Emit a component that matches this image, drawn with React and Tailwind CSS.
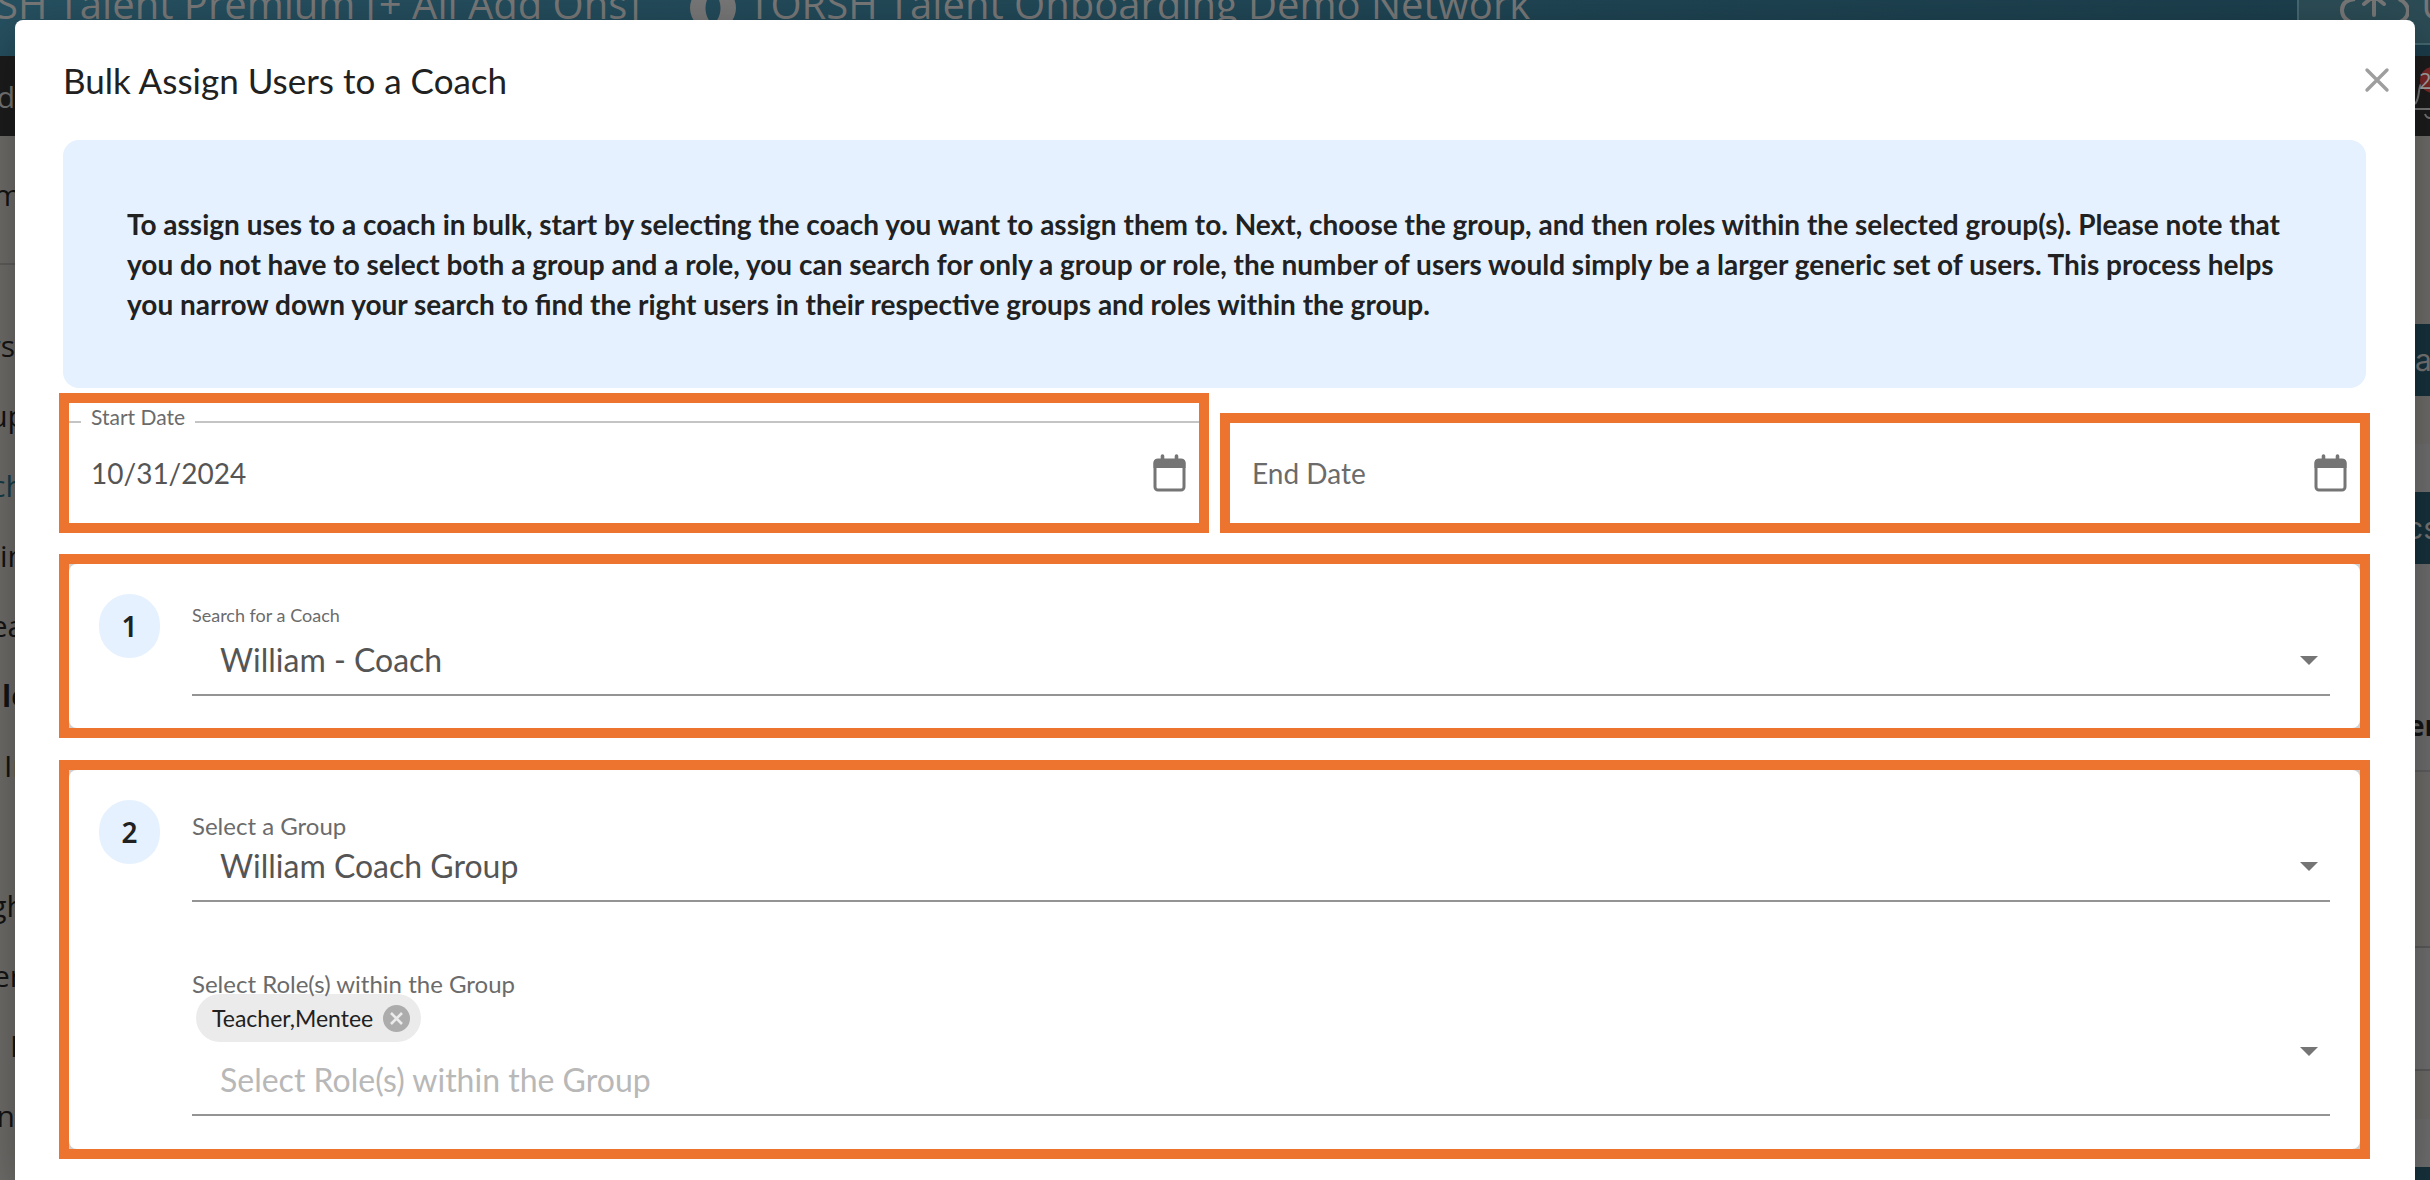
import { useState } from 'react'

const INFO_TEXT =
  'To assign uses to a coach in bulk, start by selecting the coach you want to assign them to. Next, choose the group, and then roles within the selected group(s). Please note that you do not have to select both a group and a role, you can search for only a group or role, the number of users would simply be a larger generic set of users. This process helps you narrow down your search to find the right users in their respective groups and roles within the group.'

function CalendarIcon() {
  return (
    <svg width="34" height="38" viewBox="0 0 34 38" fill="none" aria-hidden="true">
      <path d="M9.5 2v6M23.5 2v6" stroke="#757575" strokeWidth="3.6" strokeLinecap="round" />
      <rect x="2" y="6" width="29" height="30" rx="3" stroke="#757575" strokeWidth="3" />
      <path d="M0.5 9a4 4 0 0 1 4-4h24a4 4 0 0 1 4 4v5h-32z" fill="#757575" />
    </svg>
  )
}

function Arrow() {
  return (
    <svg width="18" height="9" viewBox="0 0 18 9" className="pointer-events-none shrink-0" aria-hidden="true">
      <path d="M0 0h18L9 9z" fill="#757575" />
    </svg>
  )
}

function StepNumber({ children }) {
  return (
    <div className="flex h-16 w-[61px] shrink-0 items-center justify-center rounded-full bg-[#e5f1fe] font-['Noto_Sans',sans-serif] text-[28px] font-semibold text-[#212121]">
      {children}
    </div>
  )
}

function SelectField({ id, label, labelClass, options }) {
  return (
    <div>
      <label htmlFor={id} className={`block text-[#6b6b6b] ${labelClass}`}>
        {label}
      </label>
      <div className="grid items-center border-b-2 border-[#949494]">
        <select
          id={id}
          className="col-start-1 row-start-1 h-[66px] w-full appearance-none bg-transparent pb-0.5 pl-7 text-[32px] text-[#555] outline-none"
        >
          {options.map((o) => (
            <option key={o}>{o}</option>
          ))}
        </select>
        <div className="pointer-events-none col-start-1 row-start-1 justify-self-end pr-3 pb-0.5">
          <Arrow />
        </div>
      </div>
    </div>
  )
}

// Page that stays visible around the dialog
function Backdrop() {
  return (
    <div aria-hidden="true" className="absolute inset-0 overflow-hidden bg-[#706e6b] font-['Open_Sans',sans-serif]">
      <div className="flex h-14 justify-between bg-linear-to-r from-[#265060] to-[#1b3d4b] text-[40px] text-[#777]">
        <div className="flex items-start whitespace-nowrap">
          <span className="-ml-1 leading-2">SH Talent Premium [+ All Add Ons]</span>
          <svg width="46" height="31" viewBox="0 15 46 31" className="mr-3 ml-[50px] shrink-0">
            <path fillRule="evenodd" d="M23 0a23 23 0 1 0 0 46 23 23 0 0 0 0-46zm0 6c-10 9-10 25 0 34 10-9 10-25 0-34z" fill="#777" />
          </svg>
          <span className="leading-2">TORSH Talent Onboarding Demo Network</span>
        </div>
        <div className="flex h-[45px] w-[133px] shrink-0 items-start overflow-hidden border-b-2 border-l-2 border-[#456870] bg-[#2c4c55]">
          <svg width="72" height="42" viewBox="0 0 72 42" className="ml-[38px] shrink-0" fill="none" stroke="#777" strokeWidth="4">
            <path d="M18 -1C8 0 5 5 5 10c0 6 4 12 16 14M62 -1c6 3 9 7 9 12 0 6-5 11-14 13" />
            <path d="M37 15V-4m-10 8 10-8 10 8" strokeLinecap="round" />
          </svg>
          <span className="ml-3 leading-2">Upload</span>
        </div>
      </div>
      <div className="flex h-20 items-center justify-between bg-[#1c1c1c] text-[30px] text-[#777]">
        <span className="flex w-[15px] justify-end">d</span>
        <div className="relative h-20 w-[15px] overflow-hidden">
          <svg width="15" height="80" viewBox="0 0 15 80" fill="none" stroke="#777" strokeWidth="2" className="absolute inset-0">
            <path d="M0 48c5-6 3-16 6-20M0 53h15M10 58c1 3 3 4 5 4" />
            <circle cx="18" cy="24" r="13" fill="#7c2828" stroke="none" />
          </svg>
          <span className="absolute top-2 left-1 text-[22px] leading-8 text-[#a5a5a5]">2</span>
        </div>
      </div>
      <div className="flex justify-between">
        <div className="flex w-[15px] flex-col text-[30px] leading-[70px] text-[#141414]">
          <span className="flex h-[129px] justify-center border-b-2 border-[#605e5c] pt-6">m</span>
          <span className="mt-[46px] flex h-[70px] justify-end">rs</span>
          <span className="flex h-[70px] justify-center">up</span>
          <span className="flex h-[70px] justify-center text-[#163d4a]">ch</span>
          <span className="flex h-[70px]">in</span>
          <span className="flex h-[70px] justify-center">ea</span>
          <span className="flex h-[70px] pl-0.5 font-bold">le</span>
          <span className="flex h-[70px] pl-1">In</span>
          <span className="mt-[70px] flex h-[70px] justify-center">gh</span>
          <span className="flex h-[70px] justify-center">er</span>
          <span className="flex h-[70px] pl-2.5">I</span>
          <span className="flex h-[70px] justify-end">n</span>
        </div>
        <div className="flex w-[15px] flex-col overflow-hidden text-[30px] text-[#777]">
          <div className="h-[188px]" />
          <div className="h-[72px] bg-[#16323d] font-['Inter',sans-serif] leading-[72px]">a</div>
          <div className="h-12" />
          <div className="h-12 bg-[#717171]" />
          <div className="flex h-[72px] justify-center bg-[#16323d] font-['Inter',sans-serif] leading-[72px]">cs</div>
          <div className="flex h-[206px] justify-center bg-[#6f6f6f] pt-[136px] text-[28px] leading-[50px] font-bold text-[#141414]">
            er
          </div>
          <div className="h-[176px] border-t-2 border-[#606060]" />
          <div className="h-[125px] border-y-2 border-[#5c5c5c] bg-[#717171]" />
          <div className="h-12" />
          <div className="h-12 bg-[#717171]" />
          <div className="h-4 bg-[#16323d]" />
        </div>
      </div>
    </div>
  )
}

export default function App() {
  const [startDate, setStartDate] = useState('10/31/2024')
  const [endDate, setEndDate] = useState('')
  const [roles, setRoles] = useState(['Teacher,Mentee'])

  return (
    <div className="relative flex h-screen flex-col overflow-hidden px-[15px] pt-5 font-['Lato',sans-serif]">
      <Backdrop />

      <div
        role="dialog"
        aria-labelledby="dialog-title"
        className="relative flex-1 rounded-t-lg bg-white pr-[45px] pl-11 shadow-[0_16px_50px_rgba(0,0,0,0.35)]"
      >
        <header className="-mr-6 flex h-[120px] items-center justify-between pl-1">
          <h1 id="dialog-title" className="text-[35px] text-[#212121]">
            Bulk Assign Users to a Coach
          </h1>
          <button aria-label="Close" className="p-1">
            <svg width="26" height="26" viewBox="0 0 26 26" stroke="#9e9e9e" strokeWidth="3.4" strokeLinecap="round">
              <path d="M3 3l20 20M23 3L3 23" />
            </svg>
          </button>
        </header>

        <div className="mx-1 rounded-2xl bg-[#e5f1fe] p-16">
          <p className="text-[28px] leading-10 font-bold text-[#212121]">{INFO_TEXT}</p>
        </div>

        {/* Dates */}
        <div className="mt-[5px] grid grid-cols-2 items-end gap-[11px]">
          <div className="border-10 border-[#ec742e] pb-1.5">
            <div className="flex h-[26px] items-start">
              <div className="mt-[18px] h-0.5 w-3 bg-[#c4c4c4]" />
              <label htmlFor="start-date" className="px-2.5 text-[21px] leading-7 text-[#6b6b6b]">
                Start Date
              </label>
              <div className="mt-[18px] h-0.5 flex-1 bg-[#c4c4c4]" />
            </div>
            <div className="flex h-[88px] items-center pr-3 pl-[22px]">
              <input
                id="start-date"
                value={startDate}
                onChange={(e) => setStartDate(e.target.value)}
                className="min-w-0 flex-1 text-[28px] text-[#555] outline-none"
              />
              <button aria-label="Choose start date">
                <CalendarIcon />
              </button>
            </div>
          </div>
          <div className="flex h-[120px] items-center border-10 border-[#ec742e] pr-3 pl-[22px]">
            <input
              aria-label="End Date"
              placeholder="End Date"
              value={endDate}
              onChange={(e) => setEndDate(e.target.value)}
              className="min-w-0 flex-1 text-[28px] text-[#555] outline-none placeholder:text-[#6b6b6b]"
            />
            <button aria-label="Choose end date">
              <CalendarIcon />
            </button>
          </div>
        </div>

        {/* Step 1 */}
        <section className="mt-[21px] border-10 border-[#ec742e] bg-[#d0d0d0]">
          <div className="flex gap-8 rounded-lg bg-white px-[30px] pt-[30px] pb-8">
            <StepNumber>1</StepNumber>
            <div className="flex-1 pt-[9px]">
              <SelectField
                id="coach"
                label="Search for a Coach"
                labelClass="text-[18px] leading-[25px]"
                options={['William - Coach']}
              />
            </div>
          </div>
        </section>

        {/* Step 2 */}
        <section className="mt-[22px] border-10 border-[#ec742e] bg-[#d0d0d0]">
          <div className="flex gap-8 rounded-lg bg-white px-[30px] pt-[30px] pb-[33px]">
            <StepNumber>2</StepNumber>
            <div className="flex-1 pt-[18px]">
              <SelectField
                id="group"
                label="Select a Group"
                labelClass="text-[24px] leading-4"
                options={['William Coach Group']}
              />
              <label htmlFor="roles" className="relative mt-[72px] block text-[24px] leading-5 text-[#6b6b6b]">
                Select Role(s) within the Group
              </label>
              <div className="flex items-center border-b-2 border-[#949494] pr-3">
                <div className="flex-1">
                  {roles.map((role) => (
                    <span
                      key={role}
                      className="ml-1 inline-flex h-12 items-center gap-2.5 rounded-full bg-[#ebebeb] pr-[11px] pl-4 align-top text-[23px] text-[#212121]"
                    >
                      {role}
                      <button
                        aria-label={`Remove ${role}`}
                        onClick={() => setRoles(roles.filter((r) => r !== role))}
                      >
                        <svg width="27" height="27" viewBox="0 0 27 27" aria-hidden="true">
                          <circle cx="13.5" cy="13.5" r="13.5" fill="#acacac" />
                          <path d="M8 8l11 11M19 8L8 19" stroke="#ebebeb" strokeWidth="2.6" />
                        </svg>
                      </button>
                    </span>
                  ))}
                  <input
                    id="roles"
                    placeholder="Select Role(s) within the Group"
                    className="block h-[72px] w-full pt-0.5 pl-7 text-[32px] outline-none placeholder:text-[#b8b8b8]"
                  />
                </div>
                <button aria-label="Show roles" className="pb-1.5">
                  <Arrow />
                </button>
              </div>
            </div>
          </div>
        </section>
      </div>
    </div>
  )
}
